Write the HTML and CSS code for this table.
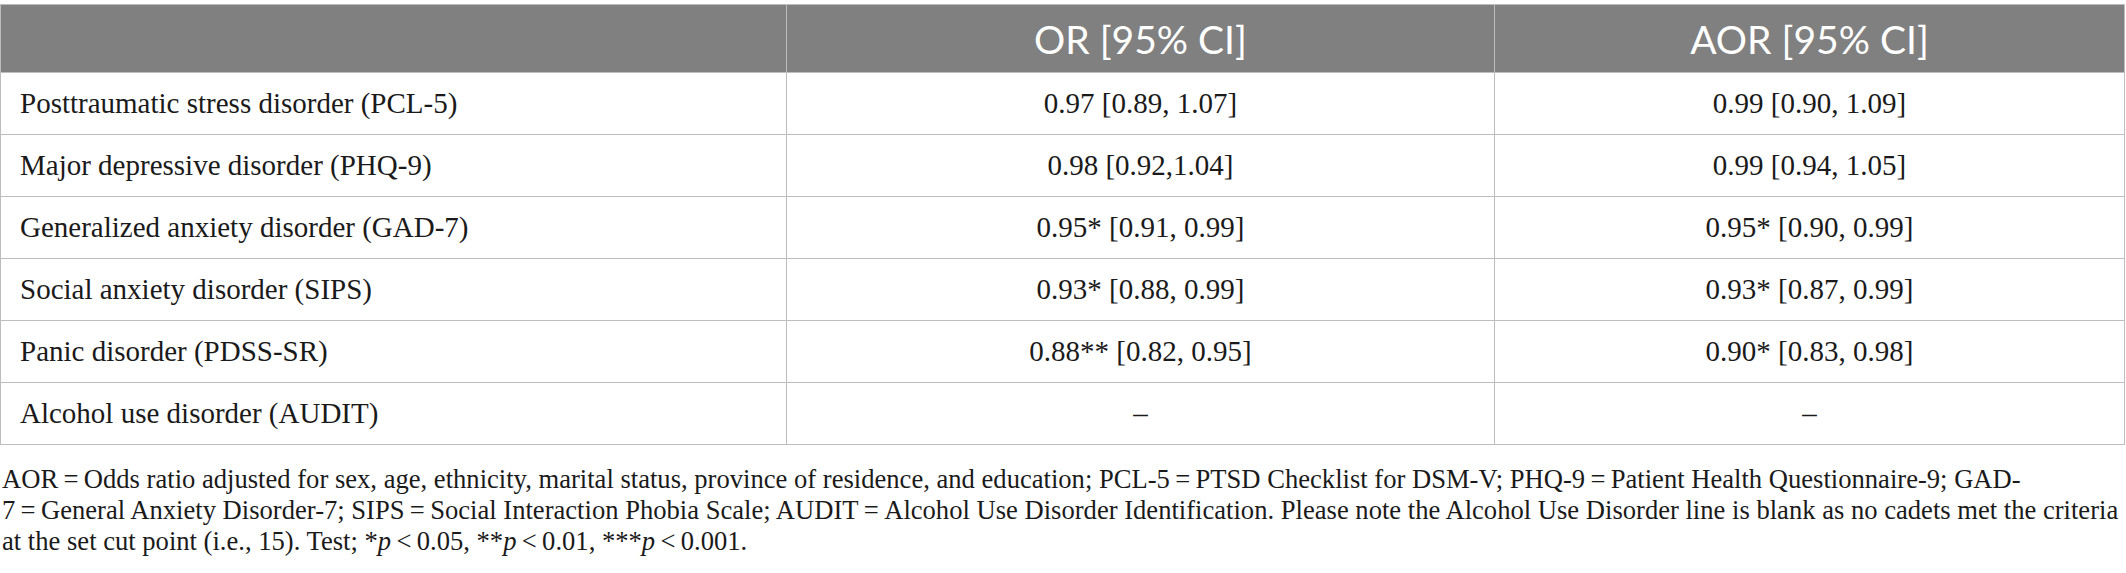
FILE: index.html
```html
<!DOCTYPE html>
<html>
<head>
  <title>Odds ratios</title>
  <link rel="stylesheet" href="styles.css">
</head>
<body>

<div class="wrap">
  <table class="results">
    <thead>
      <tr>
        <th class="label-col"></th>
        <th class="or-col">OR [95% CI]</th>
        <th class="aor-col">AOR [95% CI]</th>
      </tr>
    </thead>
    <tbody>
      <tr>
        <td class="label">Posttraumatic stress disorder (PCL-5)</td>
        <td>0.97 [0.89, 1.07]</td>
        <td>0.99 [0.90, 1.09]</td>
      </tr>
      <tr>
        <td class="label">Major depressive disorder (PHQ-9)</td>
        <td>0.98 [0.92,1.04]</td>
        <td>0.99 [0.94, 1.05]</td>
      </tr>
      <tr>
        <td class="label">Generalized anxiety disorder (GAD-7)</td>
        <td>0.95* [0.91, 0.99]</td>
        <td>0.95* [0.90, 0.99]</td>
      </tr>
      <tr>
        <td class="label">Social anxiety disorder (SIPS)</td>
        <td>0.93* [0.88, 0.99]</td>
        <td>0.93* [0.87, 0.99]</td>
      </tr>
      <tr>
        <td class="label">Panic disorder (PDSS-SR)</td>
        <td>0.88** [0.82, 0.95]</td>
        <td>0.90* [0.83, 0.98]</td>
      </tr>
      <tr>
        <td class="label">Alcohol use disorder (AUDIT)</td>
        <td>–</td>
        <td>–</td>
      </tr>
    </tbody>
  </table>

  <p class="note">
    AOR&#8201;=&#8201;Odds ratio adjusted for sex, age, ethnicity, marital status, province of residence, and education; PCL-5&#8201;=&#8201;PTSD Checklist for DSM-V; PHQ-9&#8201;=&#8201;Patient Health Questionnaire-9; GAD-<br>
    7&#8201;=&#8201;General Anxiety Disorder-7; SIPS&#8201;=&#8201;Social Interaction Phobia Scale; AUDIT&#8201;=&#8201;Alcohol Use Disorder Identification. Please note the Alcohol Use Disorder line is blank as no cadets met the criteria<br>
    at the set cut point (i.e., 15). Test; *<i>p</i>&#8201;&lt;&#8201;0.05, **<i>p</i>&#8201;&lt;&#8201;0.01, ***<i>p</i>&#8201;&lt;&#8201;0.001.
  </p>
</div>

</body>
</html>
```

FILE: styles.css
```css
body {
  margin: 0;
  padding: 4px 1px 0 0;
  background: #fff;
  color: #1a1a1a;
  font-family: 'Liberation Serif', serif;
}

.results {
  width: 2125px;
  border-collapse: collapse;
  border: 1px solid #bdbdbd;
}

.results th,
.results td {
  border: 1px solid #bdbdbd;
  padding: 0;
  vertical-align: middle;
}

.results th {
  background-color: #7f807f;
  color: #fff;
  font-family: 'Lato', sans-serif;
  font-weight: 400;
  font-size: 39px;
  height: 67px;
  text-align: center;
}

.label-col { width: 785px; }
.or-col { width: 707px; }

.results td {
  height: 61px;
  font-size: 29px;
  text-align: center;
}

.results td.label {
  text-align: left;
  padding-left: 19px;
}

.note {
  margin: 19px 0 0 2px;
  font-size: 26.6px;
  line-height: 31px;
  white-space: nowrap;
}
```
